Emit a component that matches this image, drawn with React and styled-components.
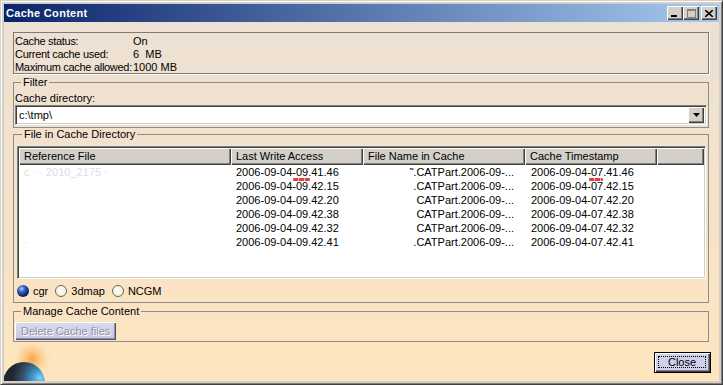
import React from "react";
import styled, { createGlobalStyle, css } from "styled-components";

const GlobalStyle = createGlobalStyle`
  html, body {
    margin: 0;
    padding: 0;
    background: #d4d0c8;
    overflow: hidden;
  }
  body {
    font-family: "Liberation Sans", Arial, sans-serif;
    font-size: 11px;
    color: #000;
  }
  * {
    box-sizing: border-box;
  }
`;

const Window = styled.div`
  width: 723px;
  height: 385px;
  display: flex;
  flex-direction: column;
  background: #d4d0c8;
  border: 1px solid;
  border-color: #d4d0c8 #404040 #404040 #d4d0c8;
  box-shadow: inset 1px 1px 0 #fff, inset -1px -1px 0 #808080;
  padding: 3px;
`;

const TitleBar = styled.div`
  height: 18px;
  flex: none;
  display: flex;
  align-items: center;
  padding: 0 2px 0 2px;
  background: linear-gradient(to right, #0a246a, #a6caf0);
`;

const Title = styled.div`
  flex: 1;
  color: #fff;
  font-weight: bold;
  font-size: 11px;
  letter-spacing: 0.3px;
`;

const Caption = styled.div`
  display: flex;
  align-items: center;
`;

const CaptionButton = styled.div`
  width: 16px;
  height: 14px;
  margin-left: ${(p) => (p.$gap ? "2px" : "0")};
  background: #d4d0c8;
  box-shadow: inset 1px 1px 0 #fff, inset -1px -1px 0 #404040,
    inset -2px -2px 0 #808080;
  display: flex;
  align-items: center;
  justify-content: center;
`;

const Body = styled.div`
  flex: 1;
  display: flex;
  flex-direction: column;
  padding: 10px 10px 0 9px;
  background: linear-gradient(to bottom, #ede1d4 0%, #f5e2c9 50%, #fee5bf 100%);
  overflow: hidden;
`;

const StatusBox = styled.div`
  display: grid;
  grid-template-columns: 118px auto;
  padding: 2px 1px 0;
  height: 42px;
  border: 1px solid #7c7c7c;
  box-shadow: 1px 1px 0 #fff;
  line-height: 13px;
  white-space: nowrap;
`;

const StatusLabel = styled.span`
  letter-spacing: -0.3px;
`;

const Group = styled.fieldset`
  margin: ${(p) => p.$top}px 0 0;
  padding: ${(p) => p.$pad};
  border: 1px solid #8c8c8c;
  min-width: 0;
`;

const Legend = styled.legend`
  margin-left: 6px;
  padding: 0 2px;
  line-height: 13px;
`;

const FieldLabel = styled.div`
  line-height: 13px;
  height: 13px;
`;

const Combo = styled.div`
  height: 20px;
  display: flex;
  align-items: center;
  background: #fff;
  border: 1px solid;
  border-color: #808080 #fff #fff #808080;
  box-shadow: inset 1px 1px 0 #404040, inset -1px -1px 0 #d4d0c8;
  padding: 2px 2px 2px 3px;
`;

const ComboText = styled.div`
  flex: 1;
`;

const DropButton = styled.div`
  width: 16px;
  height: 16px;
  background: #d4d0c8;
  box-shadow: inset 1px 1px 0 #fff, inset -1px -1px 0 #404040,
    inset -2px -2px 0 #808080;
  display: flex;
  align-items: center;
  justify-content: center;
`;

const List = styled.div`
  height: 133px;
  margin-left: 1px;
  background: #fff;
  border: 1px solid;
  border-color: #808080 #fff #fff #808080;
  box-shadow: inset 1px 1px 0 #404040, inset -1px -1px 0 #d4d0c8;
  padding: 1px;
  display: flex;
  flex-direction: column;
`;

const columns = "212px 132px 162px 132px 1fr";

const HeadRow = styled.div`
  display: grid;
  grid-template-columns: ${columns};
  height: 17px;
  flex: none;
`;

const HeadCell = styled.div`
  line-height: 16px;
  padding-left: 5px;
  background: #d4d0c8;
  box-shadow: inset 1px 1px 0 #fff, inset -1px -1px 0 #404040,
    inset -2px -2px 0 #808080;
  white-space: nowrap;
  overflow: hidden;
`;

const Row = styled.div`
  display: grid;
  grid-template-columns: ${columns};
  height: 14px;
  line-height: 14px;
`;

const Cell = styled.div`
  position: relative;
  white-space: nowrap;
  overflow: visible;
  padding-left: ${(p) => p.$pl || 0}px;
  padding-right: ${(p) => p.$pr || 0}px;
  text-align: ${(p) => p.$align || "left"};
  color: ${(p) => (p.$faint ? "#dedede" : "#000")};
`;

const Mark = styled.span`
  position: absolute;
  left: ${(p) => p.$left}px;
  width: ${(p) => p.$width}px;
  bottom: -2px;
  height: 3px;
  border-radius: 1px;
  background: repeating-linear-gradient(
    to right,
    #ee3a3a 0 5px,
    rgba(238, 58, 58, 0.35) 5px 6px
  );
  filter: blur(0.3px);
`;

const RadioRow = styled.div`
  display: flex;
  align-items: center;
  gap: 7px;
  height: 14px;
  margin-top: 5px;
  padding-left: 1px;
`;

const RadioItem = styled.label`
  display: flex;
  align-items: center;
  gap: 4px;
`;

const RadioDot = styled.span`
  width: 12px;
  height: 12px;
  border-radius: 50%;
  ${(p) =>
    p.$on
      ? css`
          background: radial-gradient(
            circle at 38% 32%,
            #b8ccf4 0,
            #3c64c4 28%,
            #102a80 60%,
            #020824 100%
          );
        `
      : css`
          background: radial-gradient(circle at 40% 35%, #fffef6, #f0ead2);
          border: 1px solid #646464;
        `}
`;

const DeleteButton = styled.div`
  width: 101px;
  height: 18px;
  display: flex;
  align-items: center;
  padding-left: 6px;
  background: linear-gradient(to bottom, #dcdcef, #c4c4df);
  box-shadow: inset 1px 1px 0 #fff, inset -1px -1px 0 #50506c,
    inset -2px -2px 0 #9090aa;
  color: #9090a6;
  text-shadow: 1px 1px 0 #fff;
`;

const Footer = styled.div`
  flex: 1;
  display: flex;
  justify-content: space-between;
  align-items: flex-start;
`;

const Globe = styled.svg`
  align-self: flex-end;
  margin-left: -9px;
`;

const CloseButton = styled.div`
  width: 57px;
  height: 21px;
  margin-top: 10px;
  margin-right: -2px;
  border: 1px solid #000;
  background: #d0d0ea;
  box-shadow: inset 1px 1px 0 #fff, inset -1px -1px 0 #404040,
    inset -2px -2px 0 #808080;
  display: flex;
  padding: 3px 4px 4px 3px;
`;

const FocusRing = styled.span`
  flex: 1;
  border: 1px dotted #000;
  display: flex;
  align-items: center;
  justify-content: center;
`;

const rows = [
  { last: "2006-09-04-09.41.46", file: "˜.CATPart.2006-09-...", stamp: "2006-09-04-07.41.46", ref: "c            ·      ·   2010_2175  ·", marks: true },
  { last: "2006-09-04-09.42.15", file: ".CATPart.2006-09-...", stamp: "2006-09-04-07.42.15" },
  { last: "2006-09-04-09.42.20", file: "CATPart.2006-09-...", stamp: "2006-09-04-07.42.20" },
  { last: "2006-09-04-09.42.38", file: "CATPart.2006-09-...", stamp: "2006-09-04-07.42.38" },
  { last: "2006-09-04-09.42.32", file: "CATPart.2006-09-...", stamp: "2006-09-04-07.42.32" },
  { last: "2006-09-04-09.42.41", file: ".CATPart.2006-09-...", stamp: "2006-09-04-07.42.41", ref: "                         ·" },
];

const App = () => {
  return (
    <Window>
      <GlobalStyle />
      <TitleBar>
        <Title>Cache Content</Title>
        <Caption>
          <CaptionButton>
            <svg width="8" height="7" viewBox="0 0 8 7">
              <rect x="0" y="5" width="6" height="2" fill="#000" />
            </svg>
          </CaptionButton>
          <CaptionButton>
            <svg width="9" height="9" viewBox="0 0 9 9">
              <rect x="0.5" y="0.5" width="8" height="8" fill="none" stroke="#808080" />
              <rect x="0" y="0" width="9" height="2" fill="#808080" />
            </svg>
          </CaptionButton>
          <CaptionButton $gap>
            <svg width="8" height="7" viewBox="0 0 8 7">
              <path d="M0 0 L8 7 M8 0 L0 7" stroke="#000" strokeWidth="1.6" />
            </svg>
          </CaptionButton>
        </Caption>
      </TitleBar>
      <Body>
        <StatusBox>
          <StatusLabel>Cache status:</StatusLabel>
          <span>On</span>
          <StatusLabel>Current cache used:</StatusLabel>
          <span>6&nbsp;&nbsp;MB</span>
          <StatusLabel>Maximum cache allowed:</StatusLabel>
          <span>1000 MB</span>
        </StatusBox>

        <Group $top={2} $pad="3px 1px 2px">
          <Legend>Filter</Legend>
          <FieldLabel>Cache directory:</FieldLabel>
          <Combo>
            <ComboText>c:\tmp\</ComboText>
            <DropButton>
              <svg width="7" height="4" viewBox="0 0 7 4">
                <path d="M0 0 H7 L3.5 4 Z" fill="#000" />
              </svg>
            </DropButton>
          </Combo>
        </Group>

        <Group $top={0} $pad="5px 2px 4px">
          <Legend>File in Cache Directory</Legend>
          <List>
            <HeadRow>
              <HeadCell>Reference File</HeadCell>
              <HeadCell>Last Write Access</HeadCell>
              <HeadCell>File Name in Cache</HeadCell>
              <HeadCell>Cache Timestamp</HeadCell>
              <HeadCell />
            </HeadRow>
            {rows.map((r) => (
              <Row key={r.last}>
                <Cell $pl={5} $faint>
                  {r.ref || ""}
                </Cell>
                <Cell $pl={5}>
                  {r.last}
                  {r.marks && <Mark $left={62} $width={17} />}
                </Cell>
                <Cell $align="right" $pr={11}>
                  {r.file}
                </Cell>
                <Cell $pl={6}>
                  {r.stamp}
                  {r.marks && <Mark $left={64} $width={14} />}
                </Cell>
                <Cell />
              </Row>
            ))}
          </List>
          <RadioRow>
            <RadioItem>
              <RadioDot $on />
              cgr
            </RadioItem>
            <RadioItem>
              <RadioDot />
              3dmap
            </RadioItem>
            <RadioItem>
              <RadioDot />
              NCGM
            </RadioItem>
          </RadioRow>
        </Group>

        <Group $top={2} $pad="4px 1px 1px">
          <Legend>Manage Cache Content</Legend>
          <DeleteButton>Delete Cache files</DeleteButton>
        </Group>

        <Footer>
          <Globe width="50" height="39" viewBox="0 0 50 39">
            <defs>
              <radialGradient id="glow" cx="28" cy="17" r="21" gradientUnits="userSpaceOnUse">
                <stop offset="0" stopColor="#f39a28" stopOpacity="0.85" />
                <stop offset="0.45" stopColor="#f7b55a" stopOpacity="0.45" />
                <stop offset="1" stopColor="#fde5bf" stopOpacity="0" />
              </radialGradient>
              <radialGradient id="sphere" cx="36" cy="36" r="28" gradientUnits="userSpaceOnUse">
                <stop offset="0" stopColor="#7fd4f4" />
                <stop offset="0.3" stopColor="#3a92c4" />
                <stop offset="0.62" stopColor="#38506a" />
                <stop offset="1" stopColor="#1e2630" />
              </radialGradient>
            </defs>
            <circle cx="28" cy="17" r="21" fill="url(#glow)" />
            <circle cx="20" cy="41" r="21" fill="url(#sphere)" />
          </Globe>
          <CloseButton>
            <FocusRing>Close</FocusRing>
          </CloseButton>
        </Footer>
      </Body>
    </Window>
  );
};

export default App;
